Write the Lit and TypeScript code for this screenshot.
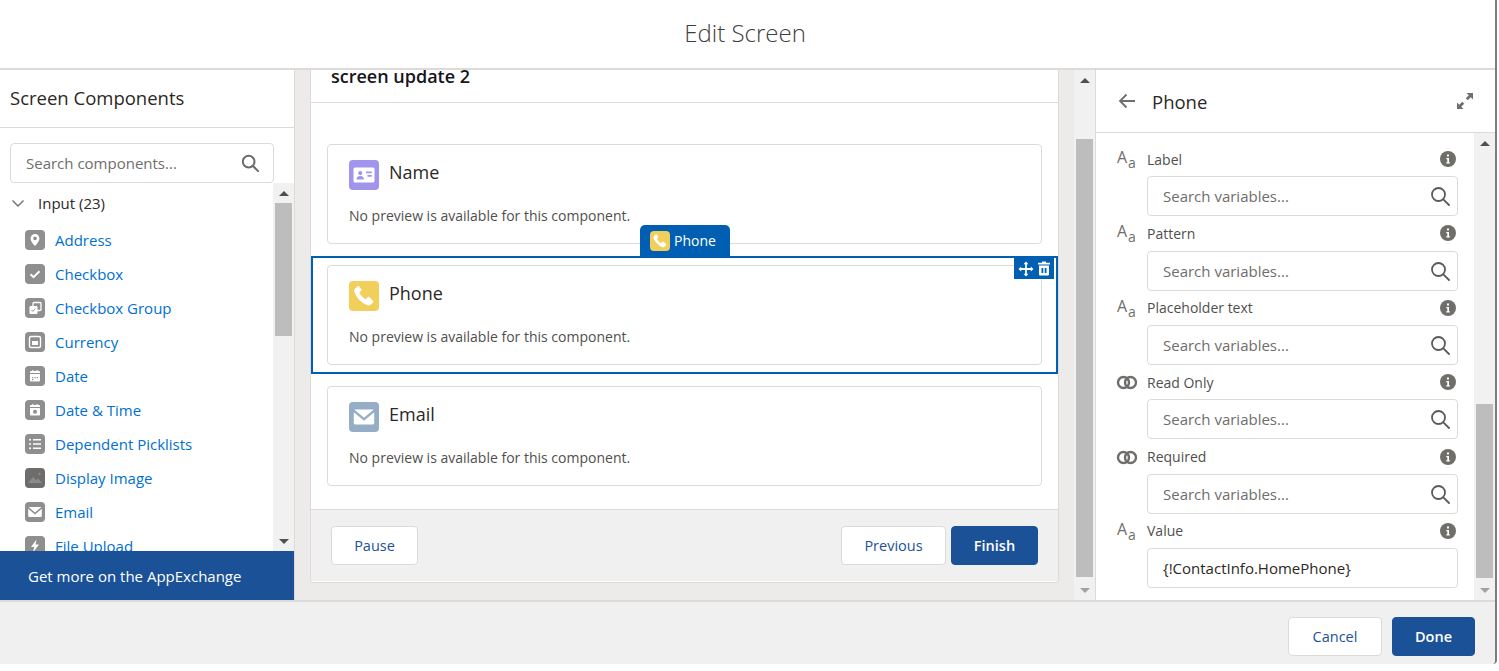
import {LitElement, html, css, svg} from 'lit';
import {customElement} from 'lit/decorators.js';

const glyphs: Record<string, unknown> = {
  address: svg`<path d="M10 4a4.4 4.4 0 0 0-4.4 4.4c0 3 3.2 6 4 7.2.2.3.6.3.8 0 .8-1.2 4-4.2 4-7.2A4.4 4.4 0 0 0 10 4zm0 6.2a1.8 1.8 0 1 1 0-3.6 1.8 1.8 0 0 1 0 3.6z" fill="#fff"/>`,
  checkbox: svg`<rect x="4" y="4" width="12" height="12" rx="1.5" fill="#8f8f8f"/><path d="M5.5 10.2l3 3 6-6" fill="none" stroke="#fff" stroke-width="2"/>`,
  group: svg`<rect x="8" y="4.5" width="8" height="8" rx="1" fill="none" stroke="#fff" stroke-width="1.3"/><rect x="4.5" y="8" width="8" height="8" rx="1" fill="#fff"/><path d="M6.5 12l1.3 1.3 2.6-2.6" fill="none" stroke="#8f8f8f" stroke-width="1"/>`,
  currency: svg`<rect x="4.5" y="4.5" width="11" height="11" rx="1.5" fill="none" stroke="#fff" stroke-width="1.4"/><rect x="7" y="9" width="6" height="4" fill="#fff"/>`,
  date: svg`<path d="M5 8h10v6.5a1 1 0 0 1-1 1H6a1 1 0 0 1-1-1zM6 5h1.2V4h1.2v1h3.2V4h1.2v1H14a1 1 0 0 1 1 1v1H5V6a1 1 0 0 1 1-1z" fill="#fff"/><path d="M7 11h1.2v1.2H7zM9.4 11h1.2v1.2H9.4zM11.8 11H13v1.2h-1.2zM7 13h1.2v1.2H7z" fill="#8f8f8f"/>`,
  datetime: svg`<path d="M5 8h10v6.5a1 1 0 0 1-1 1H6a1 1 0 0 1-1-1zM6 5h1.2V4h1.2v1h3.2V4h1.2v1H14a1 1 0 0 1 1 1v1H5V6a1 1 0 0 1 1-1z" fill="#fff"/><circle cx="10" cy="11.7" r="2" fill="#8f8f8f"/>`,
  picklist: svg`<path d="M8 5.8h8M8 10h8M8 14.2h8" stroke="#fff" stroke-width="1.6"/><circle cx="5" cy="5.8" r="1" fill="#fff"/><circle cx="5" cy="10" r="1" fill="#fff"/><circle cx="5" cy="14.2" r="1" fill="#fff"/>`,
  image: svg`<path d="M3 15l5-6 3.2 3.2L13 10.5l4 4.5z" fill="#8c8b89"/><circle cx="14.5" cy="6" r="1.2" fill="#8c8b89"/>`,
  email: svg`<path d="M3.5 5h13L10 10.5zM3.2 6.8L10 12.5l6.8-5.7V14a1 1 0 0 1-1 1H4.2a1 1 0 0 1-1-1z" fill="#fff"/>`,
  upload: svg`<path d="M11.5 3.5L6 11h3.2L8 16.5l6-8h-3.4z" fill="#fff"/>`,
  contact: svg`<rect x="3" y="5" width="14" height="10" rx="1" fill="#fff"/><circle cx="7.5" cy="8.7" r="1.4" fill="#a094ed"/><path d="M5 13c0-1.6 1-2.3 2.5-2.3S10 11.400 10 13zM11.300 7.700H15.200V8.800H11.300zM12.300 10H15.200V11.100H12.300z" fill="#a094ed"/>`,
  phone: svg`<path d="M6.800 3.600c-.3-.3-.8-.3-1.200 0L4.100 5c-.6.6-.8 1.500-.5 2.300 1.500 4 4.600 7.200 8.700 8.900.8.300 1.700.1 2.300-.5l1.400-1.400c.3-.3.300-.9 0-1.200l-2.400-2.300c-.3-.3-.9-.3-1.200 0l-1.300 1.300c-1.800-1-3.300-2.500-4.300-4.300l1.300-1.300c.3-.3.3-.9 0-1.200z" fill="#fff"/>`,
  mail: svg`<path d="M3.500 5h13L10 10.500z" fill="#fff"/><path d="M3.200 6.800L10 12.500l6.800-5.700V14a1 1 0 0 1-1 1H4.200a1 1 0 0 1-1-1z" fill="#fff"/>`,
};

@customElement('app-root')
export class AppRoot extends LitElement {
  static styles = css`
    :host {
      display: block;
      width: 1499px;
      height: 671px;
      background: #fff;
      font-family: 'Open Sans', sans-serif;
      color: #2b2826;
      overflow: hidden;
    }
    * {
      box-sizing: border-box;
    }
    svg {
      display: block;
      flex: none;
    }
    .modal {
      width: 1497px;
      height: 664px;
      display: flex;
      flex-direction: column;
      background: #f0f0f0;
      border-right: 2px solid #7d7c7b;
      border-bottom-right-radius: 4px;
    }
    .top {
      height: 70px;
      flex: none;
      background: #fff;
      border-bottom: 2px solid #dddbda;
      display: flex;
      align-items: center;
      justify-content: center;
      font-size: 24px;
      font-weight: 300;
      color: #3e3e3c;
      padding: 0 5px 3px 0;
    }
    .body {
      height: 530px;
      flex: none;
      display: flex;
      background: #ecebea;
    }

    /* left palette */
    .palette {
      width: 295px;
      flex: none;
      background: #fff;
      border-right: 1px solid #dddbda;
      display: flex;
      flex-direction: column;
    }
    .palette-title {
      height: 58px;
      flex: none;
      border-bottom: 1px solid #dddbda;
      padding: 0 10px 2px;
      display: flex;
      align-items: center;
      font-size: 18.500px;
    }
    .search-wrap {
      height: 55px;
      flex: none;
      padding: 15px 20px 0 10px;
    }
    .box {
      height: 40px;
      display: flex;
      align-items: center;
      justify-content: space-between;
      border: 1px solid #dddbda;
      border-radius: 4px;
      background: #fff;
      padding: 0 14px 0 15px;
      font-size: 15px;
      color: #706e6b;
    }
    .list-wrap {
      flex: 1;
      min-height: 0;
      display: flex;
    }
    .list {
      flex: 1;
      min-width: 0;
      overflow: hidden;
      padding: 8px 0 0 11px;
    }
    .section {
      height: 24px;
      display: flex;
      align-items: center;
      gap: 13px;
      font-size: 15px;
      margin-bottom: 8px;
    }
    .item {
      height: 34px;
      display: flex;
      align-items: center;
      gap: 10px;
      padding-left: 14px;
      font-size: 15px;
      color: #0070d2;
    }
    .tile {
      width: 20px;
      height: 20px;
      flex: none;
      border-radius: 4px;
      background: #8f8f8f;
    }
    .tile.dark {
      background: #6e6d6b;
    }
    .bar {
      width: 21px;
      flex: none;
      background: #f1f1f1;
      display: flex;
      flex-direction: column;
      align-items: center;
      padding: 0 1px;
    }
    .arrow {
      height: 20px;
      flex: none;
      width: 100%;
      display: flex;
      align-items: center;
      justify-content: center;
    }
    .up {
      width: 0;
      height: 0;
      border: 5px solid transparent;
      border-top: 0;
      border-bottom-color: #505050;
    }
    .down {
      width: 0;
      height: 0;
      border: 5px solid transparent;
      border-bottom: 0;
      border-top-color: #505050;
    }
    .down.soft {
      border-top-color: #a3a3a3;
    }
    .up.soft {
      border-bottom-color: #a3a3a3;
    }
    .thumb {
      width: 17px;
      background: #bdbdbd;
      flex: none;
    }
    .spacer {
      flex: 1;
    }
    .exchange {
      height: 49px;
      flex: none;
      background: #1b5297;
      color: #fff;
      font-size: 15px;
      font-weight: 500;
      display: flex;
      align-items: center;
      padding-left: 28px;
    }

    /* canvas */
    .stage {
      flex: 1;
      min-width: 0;
      display: flex;
    }
    .canvas-wrap {
      flex: 1;
      min-width: 0;
      padding: 0 15px 17px;
    }
    .canvas {
      height: 513px;
      background: #fff;
      border: 1px solid #dddbda;
      border-top: 0;
      border-radius: 0 0 4px 4px;
      display: flex;
      flex-direction: column;
    }
    .canvas-head {
      height: 33px;
      flex: none;
      border-bottom: 1px solid #dddbda;
      overflow: hidden;
      display: flex;
      align-items: flex-end;
      padding: 0 20px 16px;
      font-size: 18px;
      font-weight: 600;
      color: #16151a;
      line-height: 20px;
    }
    .canvas-main {
      flex: 1;
      display: flex;
      flex-direction: column;
      gap: 3px;
      padding-top: 32px;
    }
    .slot {
      height: 118px;
      flex: none;
      border: 2px solid transparent;
      padding: 7px 14px;
      position: relative;
    }
    .slot.on {
      border-color: #005fb2;
    }
    .card {
      height: 100px;
      border: 1px solid #dddbda;
      border-radius: 4px;
      padding: 15px 21px 0;
    }
    .card-top {
      display: flex;
      gap: 10px;
      height: 30px;
      font-size: 18px;
      line-height: 24px;
    }
    .avatar {
      width: 30px;
      height: 30px;
      border-radius: 4px;
    }
    .card p {
      margin: 15px 0 0;
      font-size: 14px;
      line-height: 21px;
      color: #514f4d;
    }
    .tag {
      position: absolute;
      left: 327px;
      top: -33px;
      width: 90px;
      height: 31px;
      background: #005fb2;
      border-radius: 5px 5px 0 0;
      display: flex;
      align-items: center;
      gap: 4px;
      padding-left: 10px;
      color: #fff;
      font-size: 14px;
    }
    .tag .avatar {
      width: 20px;
      height: 20px;
    }
    .tools {
      position: absolute;
      right: 2px;
      top: 0;
      width: 40px;
      height: 21px;
      background: #005fb2;
      display: flex;
      align-items: center;
      justify-content: center;
      gap: 3px;
    }
    .canvas-foot {
      height: 72px;
      flex: none;
      background: #f0f0f0;
      border-top: 1px solid #dddbda;
      margin-bottom: 1px;
      padding: 16px 20px 0;
      display: flex;
      gap: 5px;
    }
    .btn {
      height: 39px;
      display: flex;
      align-items: center;
      justify-content: center;
      border: 1px solid #dddbda;
      border-radius: 4px;
      background: #fff;
      color: #1b5297;
      font-size: 14.500px;
    }
    .btn.solid {
      background: #1b5297;
      border-color: #1b5297;
      color: #fff;
      font-weight: 600;
    }

    /* right properties */
    .props {
      width: 400px;
      flex: none;
      background: #fff;
      border-left: 1px solid #dddbda;
      display: flex;
      flex-direction: column;
    }
    .props-head {
      height: 63px;
      flex: none;
      border-bottom: 1px solid #dddbda;
      display: flex;
      align-items: center;
      padding: 0 21px 0 21px;
      font-size: 18.500px;
      gap: 15px;
    }
    .props-main {
      flex: 1;
      min-height: 0;
      display: flex;
    }
    .form {
      flex: 1;
      min-width: 0;
      display: grid;
      grid-auto-rows: 74.400px;
      padding: 13px 16px 0 20px;
    }
    .field {
      display: grid;
      grid-template-columns: 31px 1fr;
    }
    .kind {
      position: relative;
      height: 26px;
      font-size: 16px;
      color: #706e6b;
    }
    .kind span {
      position: absolute;
      left: 1px;
      top: 0;
      line-height: 22px;
    }
    .kind span + span {
      left: 12px;
      top: 6px;
      font-size: 14px;
    }
    .label-row {
      height: 26px;
      display: flex;
      align-items: center;
      justify-content: space-between;
      font-size: 14px;
      color: #514f4d;
      padding-right: 2px;
    }
    .info {
      width: 16px;
      height: 16px;
    }
    .input {
      grid-column: 2;
      height: 40px;
      margin-top: 0;
    }
    .input.filled {
      color: #2b2826;
    }
    .input svg {
      margin-right: -7px;
    }
    .bottom {
      height: 62px;
      flex: none;
      border-top: 2px solid #dddbda;
      display: flex;
      justify-content: flex-end;
      align-items: flex-start;
      gap: 10px;
      padding: 15px 20px 0 0;
    }
  `;

  private tile(name: string, size = 20, color = '#8f8f8f', cls = 'tile') {
    return html`<svg class=${cls} style="background:${color}" width=${size} height=${size} viewBox="0 0 20 20">${glyphs[name]}</svg>`;
  }

  private bar(top: number, thumb: number, soft = false) {
    return html`<div class="bar">
      <div class="arrow"><div class="up ${soft ? '' : ''}"></div></div>
      <div style="height:${top}px;flex:none"></div>
      <div class="thumb" style="height:${thumb}px"></div>
      <div class="spacer"></div>
      <div class="arrow"><div class="down ${soft ? 'soft' : ''}"></div></div>
    </div>`;
  }

  private searchIcon(size: number, color: string, width: number) {
    return html`<svg width=${size} height=${size} viewBox="0 0 20 20" fill="none" stroke=${color} stroke-width=${width}>
      <circle cx="8.500" cy="8.500" r="6.500"/><path d="M13.300 13.300l5.700 5.700" stroke-linecap="round"/>
    </svg>`;
  }

  private renderPalette() {
    const items: [string, string, boolean?][] = [
      ['Address', 'address'],
      ['Checkbox', 'checkbox'],
      ['Checkbox Group', 'group'],
      ['Currency', 'currency'],
      ['Date', 'date'],
      ['Date & Time', 'datetime'],
      ['Dependent Picklists', 'picklist'],
      ['Display Image', 'image', true],
      ['Email', 'email'],
      ['File Upload', 'upload'],
    ];
    return html`<aside class="palette">
      <div class="palette-title">Screen Components</div>
      <div class="search-wrap">
        <div class="box">Search components... ${this.searchIcon(18, '#6b6b6b', 2.200)}</div>
      </div>
      <div class="list-wrap">
        <div class="list">
          <div class="section">
            <svg width="14" height="14" viewBox="0 0 14 14" fill="none" stroke="#706e6b" stroke-width="1.400"><path d="M1.500 4.500L7 10l5.500-5.500"/></svg>
            <span>Input (23)</span>
          </div>
          ${items.map(
            ([label, icon, dark]) => html`<div class="item">
              ${this.tile(icon, 20, dark ? '#6e6d6b' : '#8f8f8f')}<span>${label}</span>
            </div>`
          )}
        </div>
        ${this.bar(0, 133)}
      </div>
      <div class="exchange">Get more on the AppExchange</div>
    </aside>`;
  }

  private card(name: string, icon: string, color: string) {
    return html`<div class="card">
      <div class="card-top">${this.tile(icon, 30, color, 'avatar')}<span>${name}</span></div>
      <p>No preview is available for this component.</p>
    </div>`;
  }

  private renderCanvas() {
    return html`<section class="stage">
      <div class="canvas-wrap">
        <div class="canvas">
          <div class="canvas-head">screen update 2</div>
          <div class="canvas-main">
            <div class="slot">${this.card('Name', 'contact', '#a094ed')}</div>
            <div class="slot on">
              ${this.card('Phone', 'phone', '#f2cf5b')}
              <div class="tag">${this.tile('phone', 20, '#f2cf5b', 'avatar')}<span>Phone</span></div>
              <div class="tools">
                <svg width="16" height="16" viewBox="0 0 16 16" fill="#fff">
                  <path d="M8 .5l2.500 2.700H8.900v3.900h3.900V5.500L15.500 8l-2.700 2.500V8.900H8.900v3.900h1.600L8 15.500l-2.500-2.700h1.600V8.900H3.200v1.600L.5 8l2.700-2.500v1.600h3.900V3.200H5.500z"/>
                </svg>
                <svg width="14" height="15" viewBox="0 0 14 15" fill="#fff">
                  <path d="M5 .5h4v1.200h4v1.800H1V1.700h4zM2 4.500h10v9a1 1 0 0 1-1 1H3a1 1 0 0 1-1-1zM4.500 7v5h1.800V7zm3.200 0v5h1.800V7z" fill-rule="evenodd"/>
                </svg>
              </div>
            </div>
            <div class="slot">${this.card('Email', 'mail', '#95aec5')}</div>
          </div>
          <div class="canvas-foot">
            <div class="btn" style="width:87px">Pause</div>
            <div class="spacer"></div>
            <div class="btn" style="width:105px">Previous</div>
            <div class="btn solid" style="width:87px">Finish</div>
          </div>
        </div>
      </div>
      ${this.bar(49, 438, true)}
    </section>`;
  }

  private renderProps() {
    const fields: [string, 'text' | 'link'][] = [
      ['Label', 'text'],
      ['Pattern', 'text'],
      ['Placeholder text', 'text'],
      ['Read Only', 'link'],
      ['Required', 'link'],
    ];
    const row = (label: string, kind: 'text' | 'link', value?: string) => html`<div class="field">
      ${kind === 'text'
        ? html`<div class="kind"><span>A</span><span>a</span></div>`
        : html`<svg width="22" height="26" viewBox="0 0 22 26" fill="none" stroke="#706e6b" stroke-width="2.400">
            <circle cx="7.500" cy="13.500" r="5.500"/><circle cx="14.500" cy="13.500" r="5.500"/>
          </svg>`}
      <div class="label-row">
        <span>${label}</span>
        <svg class="info" viewBox="0 0 16 16"><circle cx="8" cy="8" r="8" fill="#706e6b"/><path d="M7 3.500h2v2H7zM6.300 7h2.700v4.200h.8v1.300H6.300v-1.300h1V8.300h-1z" fill="#fff"/></svg>
      </div>
      ${value
        ? html`<div class="box input filled">${value}</div>`
        : html`<div class="box input">Search variables... ${this.searchIcon(20, '#5a5a5a', 1.800)}</div>`}
    </div>`;
    return html`<aside class="props">
      <div class="props-head">
        <svg width="20" height="20" viewBox="0 0 20 20" fill="none" stroke="#706e6b" stroke-width="1.800"><path d="M18 10H3M9.500 3.500L3 10l6.500 6.500"/></svg>
        <span>Phone</span>
        <div class="spacer"></div>
        <svg width="18" height="18" viewBox="0 0 18 18" fill="#706e6b">
          <path d="M10.500 1H17v6.500l-2.300-2.300-3 3-1.900-1.900 3-3zM7.500 17H1v-6.500l2.300 2.300 3-3 1.900 1.900-3 3z"/>
        </svg>
      </div>
      <div class="props-main">
        <div class="form">
          ${fields.map(([label, kind]) => row(label, kind))}
          ${row('Value', 'text', '{!ContactInfo.HomePhone}')}
        </div>
        ${this.bar(251, 174, true)}
      </div>
    </aside>`;
  }

  render() {
    return html`<div class="modal">
      <header class="top">Edit Screen</header>
      <div class="body">
        ${this.renderPalette()} ${this.renderCanvas()} ${this.renderProps()}
      </div>
      <footer class="bottom">
        <div class="btn" style="width:94px">Cancel</div>
        <div class="btn solid" style="width:83px">Done</div>
      </footer>
    </div>`;
  }
}
